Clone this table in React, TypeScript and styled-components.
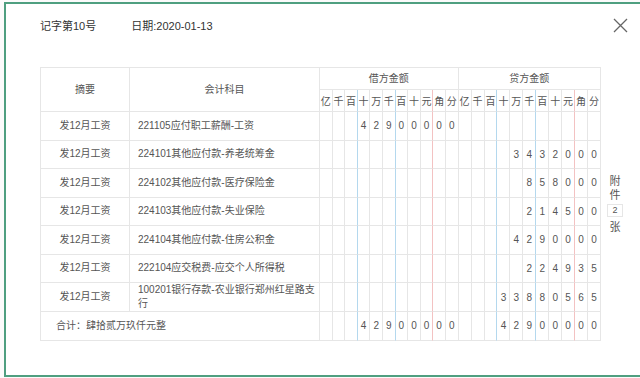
import React from "react";
import styled, { createGlobalStyle } from "styled-components";

const GlobalStyle = createGlobalStyle`
  html, body { margin: 0; padding: 0; }
  body {
    width: 640px;
    height: 378px;
    overflow: hidden;
    font-family: "Liberation Sans", "Noto Sans CJK SC", sans-serif;
    background: #fbfbfb;
  }
`;

const GRAY = "#e6e6e6";
const BLUE = "#b4d8ee";
const RED = "#f3c2c2";

const Page = styled.div`
  width: 640px;
  height: 378px;
  box-sizing: border-box;
  padding: 2px 3px 1px 4px;
  display: flex;
`;

const Modal = styled.div`
  flex: 1;
  box-sizing: border-box;
  border: 2px solid #4f9f80;
  background: #fff;
  padding: 11px 34px 0 34px;
  display: flex;
  flex-direction: column;
`;

const HeaderBar = styled.div`
  height: 20px;
  display: flex;
  align-items: center;
  justify-content: space-between;
`;

const Meta = styled.div`
  display: flex;
  align-items: center;
  gap: 35px;
  font-size: 11px;
  color: #333;
`;

const CloseButton = styled.button`
  border: 0;
  background: transparent;
  padding: 0;
  width: 16px;
  height: 16px;
  display: flex;
  align-items: center;
  justify-content: center;
  cursor: pointer;
`;

const Body = styled.div`
  margin-top: 32px;
  display: flex;
  align-items: center;
`;

const Table = styled.table`
  width: 560px;
  table-layout: fixed;
  border-collapse: separate;
  border-spacing: 0;
  border-top: 1px solid ${GRAY};
  border-left: 1px solid ${GRAY};
  font-size: 10px;
  color: #555;
`;

const HeadRow = styled.tr`
  height: 22px;
`;

const Row = styled.tr`
  height: 28.5px;
`;

const Cell = styled.td<{ $align?: string; $pad?: number }>`
  border-right: 1px solid ${GRAY};
  border-bottom: 1px solid ${GRAY};
  padding: 0 ${(p) => (p.$align === "left" ? 4 : 0)}px 0 ${(p) => p.$pad ?? 0}px;
  text-align: ${(p) => p.$align ?? "center"};
  vertical-align: middle;
  line-height: 14px;
  font-weight: normal;
`;

const DigitCell = styled.td<{ $line: string }>`
  border-right: 1px solid ${(p) => p.$line};
  border-bottom: 1px solid ${GRAY};
  padding: 0;
  text-align: center;
  vertical-align: middle;
  font-size: 10px;
  font-weight: normal;
  color: #555;
`;

const Attach = styled.div`
  width: 26px;
  display: flex;
  flex-direction: column;
  align-items: center;
  font-size: 11px;
  line-height: 14px;
  color: #555;
  margin-left: 1px;
`;

const AttachCount = styled.span`
  width: 14px;
  height: 11px;
  margin: 2px 0 3px;
  border: 1px solid #e6e6e6;
  font-size: 9px;
  line-height: 11px;
  text-align: center;
  box-sizing: content-box;
`;

const UNITS = ["亿", "千", "百", "十", "万", "千", "百", "十", "元", "角", "分"];

const lineColor = (i: number) =>
  i === 2 || i === 5 ? BLUE : i === 8 ? RED : GRAY;

const spread = (v: string) => {
  const arr = v.split("");
  const pad = Array(11 - arr.length).fill("");
  return [...pad, ...arr];
};

const rows = [
  { s: "发12月工资", a: "221105应付职工薪酬-工资", d: "42900000", c: "" },
  { s: "发12月工资", a: "224101其他应付款-养老统筹金", d: "", c: "3432000" },
  { s: "发12月工资", a: "224102其他应付款-医疗保险金", d: "", c: "858000" },
  { s: "发12月工资", a: "224103其他应付款-失业保险", d: "", c: "214500" },
  { s: "发12月工资", a: "224104其他应付款-住房公积金", d: "", c: "4290000" },
  { s: "发12月工资", a: "222104应交税费-应交个人所得税", d: "", c: "224935" },
  { s: "发12月工资", a: "100201银行存款-农业银行郑州红星路支行", d: "", c: "33880565" },
];

const Digits = ({ value }: { value: string }) => (
  <>
    {spread(value).map((ch, i) => (
      <DigitCell key={i} $line={lineColor(i)}>
        {ch}
      </DigitCell>
    ))}
  </>
);

export default function App() {
  const debitCols = Array(11).fill(12.6);
  const creditCols = Array(11).fill(12.95);
  return (
    <>
      <GlobalStyle />
      <Page>
        <Modal>
          <HeaderBar>
            <Meta>
              <span>记字第10号</span>
              <span>日期:2020-01-13</span>
            </Meta>
            <CloseButton aria-label="关闭">
              <svg width="15" height="15" viewBox="0 0 15 15">
                <path
                  d="M1 1 L14 14 M14 1 L1 14"
                  stroke="#666"
                  strokeWidth="1.3"
                  fill="none"
                />
              </svg>
            </CloseButton>
          </HeaderBar>
          <Body>
            <Table>
              <colgroup>
                <col style={{ width: 89 }} />
                <col style={{ width: 190 }} />
                {debitCols.map((w, i) => (
                  <col key={"d" + i} style={{ width: w }} />
                ))}
                {creditCols.map((w, i) => (
                  <col key={"c" + i} style={{ width: w }} />
                ))}
              </colgroup>
              <thead>
                <HeadRow>
                  <Cell as="th" rowSpan={2}>摘要</Cell>
                  <Cell as="th" rowSpan={2}>会计科目</Cell>
                  <Cell as="th" colSpan={11}>借方金额</Cell>
                  <Cell as="th" colSpan={11}>贷方金额</Cell>
                </HeadRow>
                <HeadRow>
                  {[...UNITS, ...UNITS].map((u, i) => (
                    <DigitCell as="th" key={i} $line={lineColor(i % 11)}>
                      {u}
                    </DigitCell>
                  ))}
                </HeadRow>
              </thead>
              <tbody>
                {rows.map((r, idx) => (
                  <Row key={idx}>
                    <Cell>{r.s}</Cell>
                    <Cell $align="left" $pad={8}>
                      {r.a}
                    </Cell>
                    <Digits value={r.d} />
                    <Digits value={r.c} />
                  </Row>
                ))}
                <Row>
                  <Cell colSpan={2} $align="left" $pad={15}>
                    合计：肆拾贰万玖仟元整
                  </Cell>
                  <Digits value="42900000" />
                  <Digits value="42900000" />
                </Row>
              </tbody>
            </Table>
            <Attach>
              <span>附</span>
              <span>件</span>
              <AttachCount>2</AttachCount>
              <span>张</span>
            </Attach>
          </Body>
        </Modal>
      </Page>
    </>
  );
}
